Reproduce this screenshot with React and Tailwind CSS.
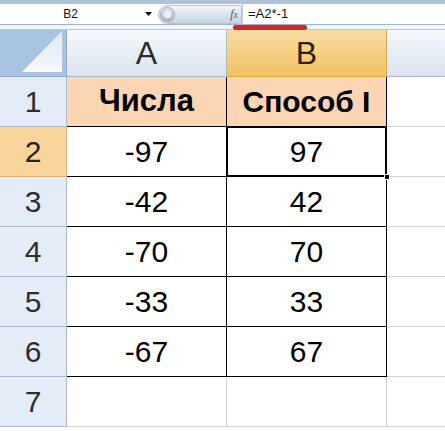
import React from 'react';

const rows = [
  ['-97', '97'],
  ['-42', '42'],
  ['-70', '70'],
  ['-33', '33'],
  ['-67', '67'],
];

function FormulaBar() {
  return (
    <div className="relative">
      <div className="h-[4px] bg-[#aec2d8]" />
      <div className="h-[21px] flex items-center bg-white border-b border-[#9fb3c8]">
        <div className="w-[140px] text-center text-[12px] text-[#111] pl-[1px]">B2</div>
        <div className="w-[16px] flex justify-center">
          <svg width="7" height="4" viewBox="0 0 7 4">
            <path d="M0 0h7L3.5 4z" fill="#111" />
          </svg>
        </div>
        <div className="ml-[2px] w-[84px] h-[19px] rounded-l-full bg-gradient-to-b from-[#f3f6fa] to-[#c6d3e2] border border-[#b5c3d3] flex items-center relative">
          <div className="ml-[1px] w-[15px] h-[15px] rounded-full bg-gradient-to-b from-[#dfe6ee] to-[#aab8c8] border border-[#9aa9ba] flex items-center justify-center">
            <div className="w-[7px] h-[7px] rounded-full bg-[#eef2f6]" />
          </div>
          <span className="ml-auto mr-[3px] text-[13px] italic text-[#56677a]" style={{ fontFamily: '"Liberation Serif", serif' }}>
            f<span className="text-[10px]">x</span>
          </span>
        </div>
        <div className="w-px h-[21px] bg-[#c9d4e0]" />
        <div className="pl-[5px] text-[13px] text-[#111]">=A2*-1</div>
      </div>
      <div className="h-[5px] bg-[#f1f4f8] border-b border-[#b8c6d6]" />
      <div className="absolute left-[233px] top-[25px] w-[74px] h-[5px] rounded-full bg-[#d3262b]" />
    </div>
  );
}

function ColHeader({ label, active }) {
  return (
    <div
      className={
        'flex items-center justify-center text-[32px] border-r border-b ' +
        (active
          ? 'bg-gradient-to-b from-[#f9dca5] to-[#f2c15f] border-[#e0a83f] text-[#2a2410]'
          : 'bg-gradient-to-b from-[#f7f9fc] to-[#d9e3ef] border-[#a8bbd0] text-[#2c2c2c]')
      }
    >
      {label}
    </div>
  );
}

function RowHeader({ n, active }) {
  return (
    <div
      className={
        'flex items-center justify-center text-[30px] border-r border-b ' +
        (active ? 'bg-[#f9d59b] border-[#e0b070] text-[#2a2410]' : 'bg-[#e4ecf7] border-[#a8bbd0] text-[#2e2e2e]')
      }
    >
      {n}
    </div>
  );
}

export default function App() {
  return (
    <div
      className="w-[445px] h-[431px] overflow-hidden bg-white"
      style={{ fontFamily: '"Liberation Sans", Arial, sans-serif' }}
    >
      <FormulaBar />
      <div className="grid grid-cols-[67px_160px_160px_1fr] grid-rows-[47px_50px_50px_50px_50px_50px_50px_50px]">
        {/* corner */}
        <div className="bg-[#a9c3e3] border-r border-b border-[#8fa9c8] flex items-end justify-end pr-[4px] pb-[4px]">
          <svg width="40" height="41" viewBox="0 0 40 41">
            <defs>
              <linearGradient id="tri" x1="0" y1="0" x2="0" y2="1">
                <stop offset="0" stopColor="#dfe8f4" />
                <stop offset="1" stopColor="#f7f9fc" />
              </linearGradient>
            </defs>
            <path d="M40 0V41H0z" fill="url(#tri)" />
          </svg>
        </div>
        <ColHeader label="A" />
        <ColHeader label="B" active />
        <div className="bg-gradient-to-b from-[#f7f9fc] to-[#d9e3ef] border-b border-[#a8bbd0]" />

        {/* row 1 */}
        <RowHeader n="1" />
        <div className="bg-[#fcd5b4] border-r border-b border-black flex items-center justify-center text-[31px] font-bold text-black">
          Числа
        </div>
        <div className="bg-[#fcd5b4] border-r border-b border-black flex items-center justify-center text-[30px] font-bold text-black">
          Способ I
        </div>
        <div className="border-b border-[#d4d4d4]" />

        {rows.map(([a, b], i) => (
          <React.Fragment key={i}>
            <RowHeader n={String(i + 2)} active={i === 0} />
            <div className="border-r border-b border-black flex items-center justify-center text-[30px] text-black">
              {a}
            </div>
            {i === 0 ? (
              <div className="relative border-r border-b border-black">
                <div className="absolute inset-[-1px] border-2 border-black flex items-center justify-center text-[30px] text-black">
                  {b}
                </div>
                <div className="absolute right-[-4px] bottom-[-4px] w-[6px] h-[6px] bg-black border border-white" />
              </div>
            ) : (
              <div className="border-r border-b border-black flex items-center justify-center text-[30px] text-black">
                {b}
              </div>
            )}
            <div className="border-b border-[#d4d4d4]" />
          </React.Fragment>
        ))}

        {/* row 7 */}
        <RowHeader n="7" />
        <div className="border-r border-b border-[#d4d4d4]" />
        <div className="border-r border-b border-[#d4d4d4]" />
        <div className="border-b border-[#d4d4d4]" />
      </div>
    </div>
  );
}
